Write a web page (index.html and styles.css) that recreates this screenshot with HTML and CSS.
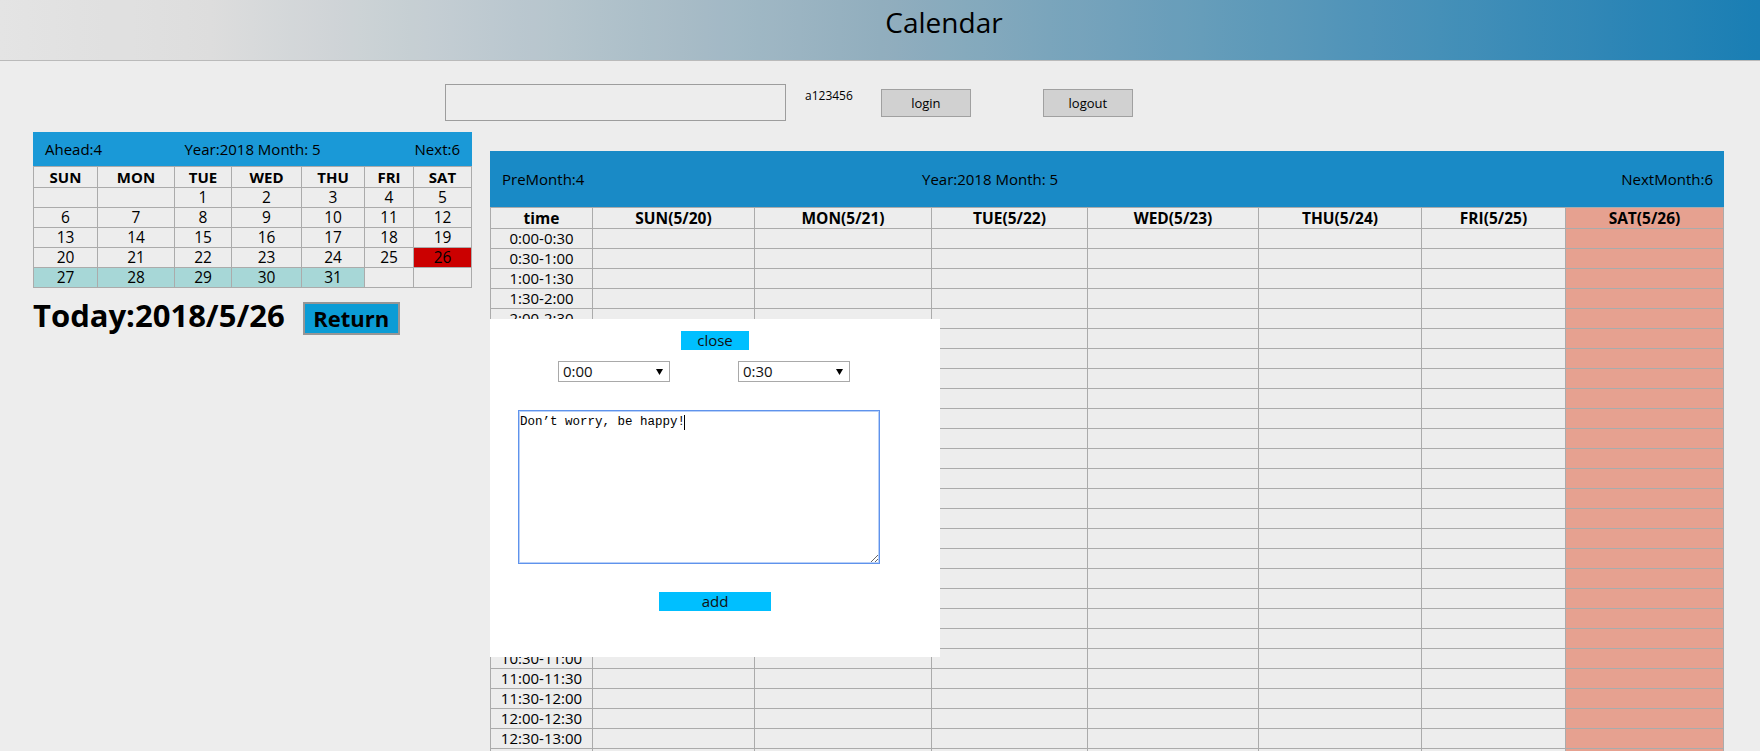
FILE: index.html
```html
<!DOCTYPE html>
<html lang="en">
<head>
<meta charset="utf-8">
<title>Calendar</title>
<link rel="stylesheet" href="styles.css">
</head>
<body>
<header class="topbar"><h1 class="title">Calendar</h1></header>

<div class="login-row">
  <input class="user-input" type="text" aria-label="user">
  <span class="user-name">a123456</span>
  <button class="sys-btn btn-login">login</button>
  <button class="sys-btn btn-logout">logout</button>
</div>

<div class="main">
  <section class="side">
    <div class="mini-head">
      <span class="mh-left">Ahead:4</span>
      <span class="mh-mid">Year:2018 Month: 5</span>
      <span class="mh-right">Next:6</span>
    </div>
    <table class="mini-cal">
      <colgroup>
        <col class="c64"><col class="c77"><col class="c57"><col class="c70"><col class="c63"><col class="c49"><col class="c58">
      </colgroup>
      <thead>
        <tr><th>SUN</th><th>MON</th><th>TUE</th><th>WED</th><th>THU</th><th>FRI</th><th>SAT</th></tr>
      </thead>
      <tbody>
        <tr><td></td><td></td><td>1</td><td>2</td><td>3</td><td>4</td><td>5</td></tr>
        <tr><td>6</td><td>7</td><td>8</td><td>9</td><td>10</td><td>11</td><td>12</td></tr>
        <tr><td>13</td><td>14</td><td>15</td><td>16</td><td>17</td><td>18</td><td>19</td></tr>
        <tr><td>20</td><td>21</td><td>22</td><td>23</td><td>24</td><td>25</td><td class="is-today">26</td></tr>
        <tr><td class="is-week">27</td><td class="is-week">28</td><td class="is-week">29</td><td class="is-week">30</td><td class="is-week">31</td><td></td><td></td></tr>
      </tbody>
    </table>
    <div class="today-row">
      <h2 class="today">Today:2018/5/26</h2>
      <button class="btn-return">Return</button>
    </div>
  </section>

  <section class="week">
    <div class="week-head">
      <span class="wh-left">PreMonth:4</span>
      <span class="wh-mid">Year:2018 Month: 5</span>
      <span class="wh-right">NextMonth:6</span>
    </div>
    <table class="week-table">
      <colgroup>
        <col class="w102"><col class="w162"><col class="w177"><col class="w156"><col class="w171"><col class="w163"><col class="w144"><col class="w158">
      </colgroup>
      <thead>
        <tr><th>time</th><th>SUN(5/20)</th><th>MON(5/21)</th><th>TUE(5/22)</th><th>WED(5/23)</th><th>THU(5/24)</th><th>FRI(5/25)</th><th>SAT(5/26)</th></tr>
      </thead>
      <tbody>
        <tr><td>0:00-0:30</td><td></td><td></td><td></td><td></td><td></td><td></td><td></td></tr>
        <tr><td>0:30-1:00</td><td></td><td></td><td></td><td></td><td></td><td></td><td></td></tr>
        <tr><td>1:00-1:30</td><td></td><td></td><td></td><td></td><td></td><td></td><td></td></tr>
        <tr><td>1:30-2:00</td><td></td><td></td><td></td><td></td><td></td><td></td><td></td></tr>
        <tr><td>2:00-2:30</td><td></td><td></td><td></td><td></td><td></td><td></td><td></td></tr>
        <tr><td>2:30-3:00</td><td></td><td></td><td></td><td></td><td></td><td></td><td></td></tr>
        <tr><td>3:00-3:30</td><td></td><td></td><td></td><td></td><td></td><td></td><td></td></tr>
        <tr><td>3:30-4:00</td><td></td><td></td><td></td><td></td><td></td><td></td><td></td></tr>
        <tr><td>4:00-4:30</td><td></td><td></td><td></td><td></td><td></td><td></td><td></td></tr>
        <tr><td>4:30-5:00</td><td></td><td></td><td></td><td></td><td></td><td></td><td></td></tr>
        <tr><td>5:00-5:30</td><td></td><td></td><td></td><td></td><td></td><td></td><td></td></tr>
        <tr><td>5:30-6:00</td><td></td><td></td><td></td><td></td><td></td><td></td><td></td></tr>
        <tr><td>6:00-6:30</td><td></td><td></td><td></td><td></td><td></td><td></td><td></td></tr>
        <tr><td>6:30-7:00</td><td></td><td></td><td></td><td></td><td></td><td></td><td></td></tr>
        <tr><td>7:00-7:30</td><td></td><td></td><td></td><td></td><td></td><td></td><td></td></tr>
        <tr><td>7:30-8:00</td><td></td><td></td><td></td><td></td><td></td><td></td><td></td></tr>
        <tr><td>8:00-8:30</td><td></td><td></td><td></td><td></td><td></td><td></td><td></td></tr>
        <tr><td>8:30-9:00</td><td></td><td></td><td></td><td></td><td></td><td></td><td></td></tr>
        <tr><td>9:00-9:30</td><td></td><td></td><td></td><td></td><td></td><td></td><td></td></tr>
        <tr><td>9:30-10:00</td><td></td><td></td><td></td><td></td><td></td><td></td><td></td></tr>
        <tr><td>10:00-10:30</td><td></td><td></td><td></td><td></td><td></td><td></td><td></td></tr>
        <tr><td>10:30-11:00</td><td></td><td></td><td></td><td></td><td></td><td></td><td></td></tr>
        <tr><td>11:00-11:30</td><td></td><td></td><td></td><td></td><td></td><td></td><td></td></tr>
        <tr><td>11:30-12:00</td><td></td><td></td><td></td><td></td><td></td><td></td><td></td></tr>
        <tr><td>12:00-12:30</td><td></td><td></td><td></td><td></td><td></td><td></td><td></td></tr>
        <tr><td>12:30-13:00</td><td></td><td></td><td></td><td></td><td></td><td></td><td></td></tr>
        <tr><td>13:00-13:30</td><td></td><td></td><td></td><td></td><td></td><td></td><td></td></tr>
        <tr><td>13:30-14:00</td><td></td><td></td><td></td><td></td><td></td><td></td><td></td></tr>
        <tr><td>14:00-14:30</td><td></td><td></td><td></td><td></td><td></td><td></td><td></td></tr>
        <tr><td>14:30-15:00</td><td></td><td></td><td></td><td></td><td></td><td></td><td></td></tr>
        <tr><td>15:00-15:30</td><td></td><td></td><td></td><td></td><td></td><td></td><td></td></tr>
        <tr><td>15:30-16:00</td><td></td><td></td><td></td><td></td><td></td><td></td><td></td></tr>
        <tr><td>16:00-16:30</td><td></td><td></td><td></td><td></td><td></td><td></td><td></td></tr>
        <tr><td>16:30-17:00</td><td></td><td></td><td></td><td></td><td></td><td></td><td></td></tr>
        <tr><td>17:00-17:30</td><td></td><td></td><td></td><td></td><td></td><td></td><td></td></tr>
        <tr><td>17:30-18:00</td><td></td><td></td><td></td><td></td><td></td><td></td><td></td></tr>
        <tr><td>18:00-18:30</td><td></td><td></td><td></td><td></td><td></td><td></td><td></td></tr>
        <tr><td>18:30-19:00</td><td></td><td></td><td></td><td></td><td></td><td></td><td></td></tr>
        <tr><td>19:00-19:30</td><td></td><td></td><td></td><td></td><td></td><td></td><td></td></tr>
        <tr><td>19:30-20:00</td><td></td><td></td><td></td><td></td><td></td><td></td><td></td></tr>
        <tr><td>20:00-20:30</td><td></td><td></td><td></td><td></td><td></td><td></td><td></td></tr>
        <tr><td>20:30-21:00</td><td></td><td></td><td></td><td></td><td></td><td></td><td></td></tr>
        <tr><td>21:00-21:30</td><td></td><td></td><td></td><td></td><td></td><td></td><td></td></tr>
        <tr><td>21:30-22:00</td><td></td><td></td><td></td><td></td><td></td><td></td><td></td></tr>
        <tr><td>22:00-22:30</td><td></td><td></td><td></td><td></td><td></td><td></td><td></td></tr>
        <tr><td>22:30-23:00</td><td></td><td></td><td></td><td></td><td></td><td></td><td></td></tr>
        <tr><td>23:00-23:30</td><td></td><td></td><td></td><td></td><td></td><td></td><td></td></tr>
        <tr><td>23:30-24:00</td><td></td><td></td><td></td><td></td><td></td><td></td><td></td></tr>
      </tbody>
    </table>
  </section>
</div>

<div class="mask"></div>

<div class="modal" role="dialog">
  <button class="modal-btn btn-close">close</button>
  <div class="sel-row">
    <div class="sel"><span>0:00</span><svg class="arrow" width="7" height="6" viewBox="0 0 7 6"><polygon points="0,0 7,0 3.5,6" fill="#000"/></svg></div>
    <div class="sel"><span>0:30</span><svg class="arrow" width="7" height="6" viewBox="0 0 7 6"><polygon points="0,0 7,0 3.5,6" fill="#000"/></svg></div>
  </div>
  <div class="note-wrap">
    <textarea class="note">Don’t worry, be happy!</textarea>
    <span class="caret"></span>
  </div>
  <button class="modal-btn btn-add">add</button>
</div>
</body>
</html>
```

FILE: styles.css
```css
html, body {
  margin: 0;
  padding: 0;
  overflow: hidden;
}

body {
  background: #ffffff;
  color: #000;
  font-family: "Open Sans", "Noto Sans", sans-serif;
}

/* ---------- top bar ---------- */
.topbar {
  height: 60px;
  background: linear-gradient(to right, #f6f6f6 0%, #eeeeee 12%, #9dbccd 50%, #1c88c2 100%);
  border-bottom: 1px solid #c9c9c9;
}

.title {
  margin: 0;
  padding-left: 128px;
  text-align: center;
  font-size: 28px;
  font-weight: 400;
  line-height: 44px;
}

/* ---------- login row ---------- */
.login-row {
  display: flex;
  align-items: center;
  padding: 23px 0 0 445px;
}

.user-input {
  box-sizing: border-box;
  width: 341px;
  height: 37px;
  margin: 0;
  border: 1px solid #a9a9a9;
  background: #fff;
}

.user-name {
  align-self: flex-start;
  margin: 4px 0 0 19px;
  font-size: 12px;
  line-height: 16px;
}

.sys-btn {
  box-sizing: border-box;
  width: 90px;
  height: 28px;
  padding: 0;
  border: 1px solid #adadad;
  background: #e1e1e1;
  font-family: "Open Sans", "Noto Sans", sans-serif;
  font-size: 13px;
  color: #000;
}

.btn-login { margin-left: 28px; }
.btn-logout { margin-left: 72px; }

/* ---------- main ---------- */
.main {
  display: flex;
  align-items: flex-start;
  padding-left: 33px;
  margin-top: 11px;
}

.side {
  width: 439px;
  flex: none;
}

.mini-head {
  display: grid;
  grid-template-columns: 1fr auto 1fr;
  height: 34px;
  padding: 0 12px;
  background: #1ca5e8;
  font-size: 15px;
  line-height: 34px;
}

.mh-right { text-align: right; }

.mini-cal {
  width: 439px;
  table-layout: fixed;
  border-collapse: collapse;
  font-size: 15.5px;
}

.mini-cal th,
.mini-cal td {
  padding: 0;
  border: 1px solid #b8b8b8;
  text-align: center;
}

.mini-cal th { line-height: 20px; font-weight: 700; font-size: 15px; }
.mini-cal td { line-height: 19px; }

.c64 { width: 64px; }
.c77 { width: 77px; }
.c57 { width: 57px; }
.c70 { width: 70px; }
.c63 { width: 63px; }
.c49 { width: 49px; }
.c58 { width: 58px; }

.mini-cal .is-today { background: #db0000; }
.mini-cal .is-week { background: #b4e8e8; }

.today-row {
  display: flex;
  align-items: flex-start;
  margin-top: 14px;
}

.today {
  margin: 0;
  font-size: 31px;
  font-weight: 700;
  line-height: 27px;
}

.btn-return {
  box-sizing: border-box;
  width: 97px;
  height: 33px;
  margin-left: 18px;
  padding: 0;
  border: 2px solid #a2a2a2;
  background: #0ca8e6;
  font-family: "Open Sans", "Noto Sans", sans-serif;
  font-size: 22px;
  font-weight: 700;
  line-height: 29px;
  color: #000;
}

/* ---------- week ---------- */
.week {
  width: 1234px;
  flex: none;
  margin: 19px 0 0 18px;
}

.week-head {
  display: grid;
  grid-template-columns: 432px auto 1fr;
  height: 56px;
  background: #1b95d6;
  font-size: 15px;
  line-height: 56px;
}

.wh-left { padding-left: 12px; }
.wh-right { text-align: right; padding-right: 11px; }

.week-table {
  width: 1234px;
  table-layout: fixed;
  border-collapse: collapse;
  font-size: 15px;
}

.week-table th,
.week-table td {
  padding: 0;
  border: 1px solid #b8b8b8;
  text-align: center;
}

.week-table th { line-height: 20px; font-weight: 700; font-size: 15.5px; }
.week-table td { line-height: 19px; }

.week-table th:last-child,
.week-table td:last-child { background: #f8ae9b; }

.w102 { width: 102px; }
.w162 { width: 162px; }
.w177 { width: 177px; }
.w156 { width: 156px; }
.w171 { width: 171px; }
.w163 { width: 163px; }
.w144 { width: 144px; }
.w158 { width: 158px; }

/* ---------- overlay + modal ---------- */
.mask {
  position: fixed;
  inset: 0;
  background: rgba(0, 0, 0, 0.07);
}

.modal {
  position: fixed;
  left: 490px;
  top: 319px;
  width: 450px;
  height: 338px;
  box-sizing: border-box;
  padding-top: 12px;
  background: #fff;
  display: flex;
  flex-direction: column;
}

.modal-btn {
  display: block;
  height: 19px;
  padding: 0;
  border: none;
  background: #00bfff;
  font-family: "Open Sans", "Noto Sans", sans-serif;
  font-size: 15px;
  line-height: 19px;
  color: #111;
  align-self: center;
}

.btn-close { width: 68px; }
.btn-add { width: 112px; margin-top: 28px; }

.sel-row {
  display: flex;
  gap: 68px;
  margin: 11px 0 0 68px;
}

.sel {
  box-sizing: border-box;
  width: 112px;
  height: 21px;
  padding: 0 6px 0 4px;
  border: 1px solid #a9a9a9;
  display: flex;
  align-items: center;
  justify-content: space-between;
  font-size: 15px;
  line-height: 19px;
  color: #111;
}

.arrow { display: block; margin-top: 1px; }

.note-wrap {
  position: relative;
  margin: 28px 0 0 28px;
  width: 362px;
  height: 154px;
}

.note {
  display: block;
  box-sizing: border-box;
  width: 362px;
  height: 154px;
  margin: 0;
  padding: 4px 0 0 1px;
  border: 1px solid #5f93ec;
  box-shadow: inset 0 0 0 1px #b9d0f7;
  outline: none;
  font-family: "Liberation Mono", monospace;
  font-size: 12.5px;
  line-height: 15px;
  color: #000;
  background: #fff;
}

.caret {
  position: absolute;
  left: 166px;
  top: 5px;
  width: 1px;
  height: 15px;
  background: #000;
}
```
